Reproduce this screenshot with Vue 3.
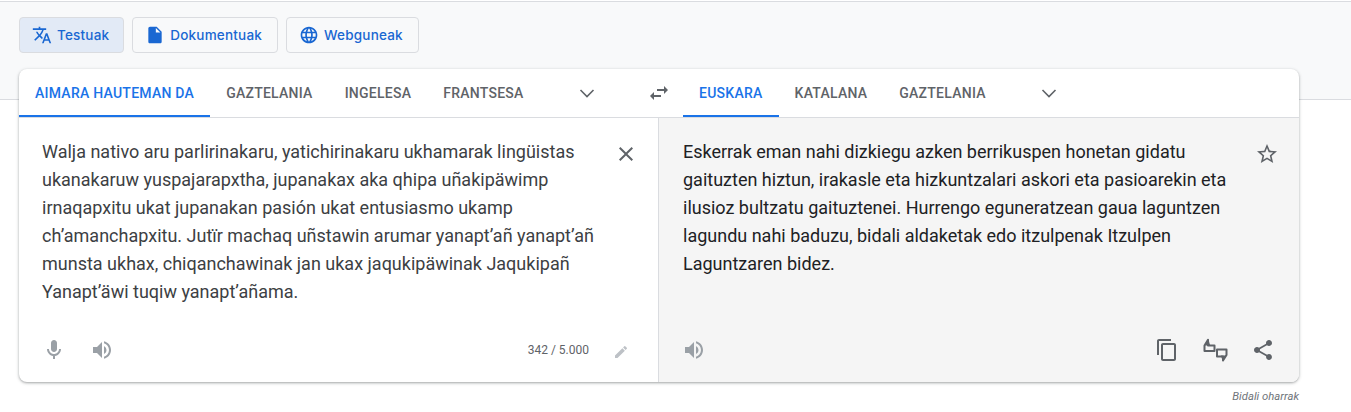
<script setup>
const modes = [
  { label: 'Testuak', icon: 'translate', active: true },
  { label: 'Dokumentuak', icon: 'doc' },
  { label: 'Webguneak', icon: 'globe' },
]
const sourceTabs = ['AIMARA HAUTEMAN DA', 'GAZTELANIA', 'INGELESA', 'FRANTSESA']
const targetTabs = ['EUSKARA', 'KATALANA', 'GAZTELANIA']
const sourceText = ['Walja nativo aru parlirinakaru, yatichirinakaru ukhamarak lingüistas', 'ukanakaruw yuspajarapxtha, jupanakax aka qhipa uñakipäwimp', 'irnaqapxitu ukat jupanakan pasión ukat entusiasmo ukamp', 'ch’amanchapxitu. Jutïr machaq uñstawin arumar yanapt’añ yanapt’añ', 'munsta ukhax, chiqanchawinak jan ukax jaqukipäwinak Jaqukipañ', 'Yanapt’äwi tuqiw yanapt’añama.']
const targetText = ['Eskerrak eman nahi dizkiegu azken berrikuspen honetan gidatu', 'gaituzten hiztun, irakasle eta hizkuntzalari askori eta pasioarekin eta', 'ilusioz bultzatu gaituztenei. Hurrengo eguneratzean gaua laguntzen', 'lagundu nahi baduzu, bidali aldaketak edo itzulpenak Itzulpen', 'Laguntzaren bidez.']
</script>

<template>
  <div class="page">
    <nav class="modes">
      <button v-for="m in modes" :key="m.label" class="mode" :class="{ active: m.active }">
        <svg v-if="m.icon === 'translate'" width="20" height="20" viewBox="0 0 24 24" fill="#1967d2"><path d="M12.87 15.07l-2.54-2.51.03-.03A17.52 17.52 0 0 0 14.07 6H17V4h-7V2H8v2H1v1.99h11.17C11.5 7.92 10.44 9.75 9 11.35 8.07 10.32 7.3 9.19 6.69 8h-2c.73 1.63 1.73 3.17 2.98 4.56l-5.09 5.02L4 19l5-5 3.11 3.11.76-2.04zM18.5 10h-2L12 22h2l1.12-3h4.75L21 22h2l-4.5-12zm-2.62 7l1.62-4.33L19.12 17h-3.24z"/></svg>
        <svg v-else-if="m.icon === 'doc'" width="20" height="20" viewBox="0 0 24 24" fill="#1967d2"><path d="M14 2H6c-1.1 0-2 .9-2 2v16c0 1.1.9 2 2 2h12c1.1 0 2-.9 2-2V8l-6-6zm-1 7V3.5L18.5 9H13z"/></svg>
        <svg v-else width="20" height="20" viewBox="0 0 24 24" fill="#1967d2"><path d="M11.99 2C6.47 2 2 6.48 2 12s4.47 10 9.99 10C17.52 22 22 17.52 22 12S17.52 2 11.99 2zm6.93 6h-2.95a15.65 15.65 0 0 0-1.38-3.56A8.03 8.03 0 0 1 18.92 8zM12 4.04c.83 1.2 1.48 2.53 1.91 3.96h-3.82c.43-1.43 1.08-2.76 1.91-3.96zM4.26 14C4.1 13.36 4 12.69 4 12s.1-1.36.26-2h3.38c-.08.66-.14 1.32-.14 2s.06 1.34.14 2H4.26zm.82 2h2.95c.32 1.25.78 2.45 1.38 3.56A7.987 7.987 0 0 1 5.08 16zm2.95-8H5.08a7.987 7.987 0 0 1 4.33-3.56A15.65 15.65 0 0 0 8.03 8zM12 19.96c-.83-1.2-1.48-2.53-1.91-3.96h3.82c-.43 1.43-1.08 2.76-1.91 3.96zM14.34 14H9.66c-.09-.66-.16-1.32-.16-2s.07-1.35.16-2h4.68c.09.65.16 1.32.16 2s-.07 1.34-.16 2zm.25 5.56c.6-1.11 1.06-2.31 1.38-3.56h2.95a8.03 8.03 0 0 1-4.33 3.56zM16.36 14c.08-.66.14-1.32.14-2s-.06-1.34-.14-2h3.38c.16.64.26 1.31.26 2s-.1 1.36-.26 2h-3.38z"/></svg>
        <span>{{ m.label }}</span>
      </button>
    </nav>

    <section class="card">
      <header class="tabsbar">
        <div class="side source-side">
          <span v-for="(t, i) in sourceTabs" :key="t" class="tab" :class="{ on: i === 0 }">{{ t }}</span>
          <svg class="chev" width="24" height="24" viewBox="0 0 24 24"><path d="M5.500 9l6.500 6.500L18.500 9" fill="none" stroke="#5f6368" stroke-width="1.600"/></svg>
        </div>
        <div class="swap">
          <svg width="24" height="24" viewBox="0 0 24 24" fill="#5f6368"><path d="M6.990 11L3 15l3.990 4v-3H14v-2H6.990v-3zM21 9l-3.990-4v3H10v2h7.010v3L21 9z"/></svg>
        </div>
        <div class="side target-side">
          <span v-for="(t, i) in targetTabs" :key="t" class="tab" :class="{ on: i === 0 }">{{ t }}</span>
          <svg class="chev chev2" width="24" height="24" viewBox="0 0 24 24"><path d="M5.500 9l6.500 6.500L18.500 9" fill="none" stroke="#5f6368" stroke-width="1.600"/></svg>
        </div>
      </header>

      <div class="panes">
        <div class="pane left">
          <div class="body">
            <p class="text dim"><span v-for="l in sourceText" :key="l" class="line">{{ l }}</span></p>
            <svg class="close" width="24" height="24" viewBox="0 0 24 24" fill="#5f6368"><path d="M19 6.410L17.590 5 12 10.590 6.410 5 5 6.410 10.590 12 5 17.590 6.410 19 12 13.410 17.590 19 19 17.590 13.410 12z"/></svg>
          </div>
          <footer class="foot">
            <div class="icons">
              <svg width="24" height="24" viewBox="0 0 24 24" fill="#9aa0a6" class="i-mic"><path d="M12 14c1.660 0 3-1.340 3-3V5c0-1.660-1.340-3-3-3S9 3.340 9 5v6c0 1.660 1.340 3 3 3z"/><path d="M17 11c0 2.760-2.240 5-5 5s-5-2.240-5-5H5c0 3.530 2.610 6.430 6 6.920V21h2v-3.080c3.390-.49 6-3.390 6-6.920h-2z"/></svg>
              <svg width="24" height="24" viewBox="0 0 24 24" fill="#9aa0a6"><path d="M3 9v6h4l5 5V4L7 9H3zm13.500 3A4.500 4.500 0 0 0 14 7.970v8.050c1.480-.73 2.500-2.250 2.500-4.020zM14 3.230v2.060c2.890.86 5 3.540 5 6.710s-2.110 5.850-5 6.710v2.060c4.010-.91 7-4.490 7-8.770s-2.990-7.860-7-8.770z"/></svg>
            </div>
            <div class="count">
              <span>342 / 5.000</span>
              <svg class="pencil" width="16" height="16" viewBox="0 0 24 24" fill="#bdc1c6"><path d="M3 17.250V21h3.750L17.810 9.940l-3.750-3.750L3 17.250zM20.710 7.040a1 1 0 0 0 0-1.410l-2.340-2.340a1 1 0 0 0-1.410 0l-1.830 1.830 3.750 3.750 1.830-1.830z"/></svg>
            </div>
          </footer>
        </div>
        <div class="pane right">
          <div class="body">
            <p class="text"><span v-for="l in targetText" :key="l" class="line">{{ l }}</span></p>
            <svg class="star" width="24" height="24" viewBox="0 0 24 24" fill="#5f6368"><path d="M22 9.240l-7.190-.62L12 2 9.190 8.630 2 9.240l5.460 4.730L5.820 21 12 17.270 18.180 21l-1.630-7.030L22 9.240zM12 15.400l-3.760 2.270 1-4.280-3.320-2.880 4.380-.38L12 6.100l1.710 4.040 4.380.38-3.320 2.880 1 4.280L12 15.400z"/></svg>
          </div>
          <footer class="foot">
            <div class="icons">
              <svg width="24" height="24" viewBox="0 0 24 24" fill="#9aa0a6"><path d="M3 9v6h4l5 5V4L7 9H3zm13.500 3A4.500 4.500 0 0 0 14 7.970v8.050c1.480-.73 2.500-2.250 2.500-4.020zM14 3.230v2.060c2.890.86 5 3.540 5 6.710s-2.110 5.850-5 6.710v2.060c4.010-.91 7-4.490 7-8.770s-2.990-7.860-7-8.770z"/></svg>
            </div>
            <div class="actions">
              <svg width="24" height="24" viewBox="0 0 24 24" fill="#5f6368"><path d="M16 1H4c-1.100 0-2 .9-2 2v14h2V3h12V1zm3 4H8c-1.100 0-2 .9-2 2v14c0 1.100.9 2 2 2h11c1.100 0 2-.9 2-2V7c0-1.100-.9-2-2-2zm0 16H8V7h11v14z"/></svg>
              <svg class="rate" width="26" height="24" viewBox="0 0 26 24" fill="none" stroke="#5f6368" stroke-width="2" stroke-linejoin="round"><path d="M1.500 7.500L5 1.800V7.500h6.500v5.500H1.500z"/><path d="M14 11.500h9.500V17L20 22.500V18.500h-6z"/><path d="M2 7.500L5.200 .8 7.200 7.500z" fill="#5f6368" stroke="none"/><path d="M23 17.500L19.800 23.200 17.800 17.500z" fill="#5f6368" stroke="none"/></svg>
              <svg width="24" height="24" viewBox="0 0 24 24" fill="#5f6368"><path d="M18 16.080c-.76 0-1.440.3-1.960.77L8.910 12.700c.05-.23.090-.46.090-.7s-.04-.47-.09-.7l7.050-4.110c.54.500 1.250.81 2.040.81 1.660 0 3-1.340 3-3s-1.340-3-3-3-3 1.340-3 3c0 .24.040.47.090.7L8.040 9.810C7.500 9.310 6.790 9 6 9c-1.660 0-3 1.340-3 3s1.340 3 3 3c.79 0 1.500-.31 2.040-.81l7.120 4.160c-.05.210-.08.430-.08.650 0 1.610 1.310 2.920 2.920 2.920s2.920-1.310 2.920-2.920-1.310-2.920-2.920-2.920z"/></svg>
            </div>
          </footer>
        </div>
      </div>
    </section>
    <p class="feedback">Bidali oharrak</p>
  </div>
</template>

<style>
html, body { margin: 0; background: #fff; }
</style>

<style scoped>
.page {
  width: 1351px;
  height: 412px;
  box-sizing: border-box;
  padding: 17px 52px 0 19px;
  overflow: hidden;
  font-family: Roboto, sans-serif;
  background: linear-gradient(to bottom, #fff 0, #fff 1px, #dadce0 1px, #dadce0 2px, #f8f9fa 2px, #f8f9fa 99px, #dadce0 99px, #dadce0 100px, #fff 100px);
}
.modes { display: flex; gap: 8px; height: 36px; }
.mode {
  display: flex;
  align-items: center;
  gap: 5px;
  height: 36px;
  padding: 0 15px 0 12px;
  box-sizing: border-box;
  border: 1px solid #dadce0;
  border-radius: 4px;
  background: transparent;
  color: #1967d2;
  font: 500 13.5px Inter, sans-serif;
  letter-spacing: .2px;
}
.mode.active { background: #e2eaf6; padding-right: 14px; }
.card {
  margin-top: 16px;
  height: 313px;
  display: flex;
  flex-direction: column;
  background: #fff;
  border-radius: 8px;
  box-shadow: 0 1px 2px rgba(60,64,67,.3), 0 1px 3px 1px rgba(60,64,67,.15);
  overflow: hidden;
}
.tabsbar { display: flex; height: 48px; border-bottom: 1px solid #dadce0; flex: none; }
.side { display: flex; }
.source-side { width: 616px; }
.swap { width: 48px; display: flex; align-items: center; justify-content: center; }
.tab {
  display: flex;
  align-items: center;
  height: 48px;
  box-sizing: border-box;
  padding: 0 16px;
  font-size: 14px;
  font-weight: 500;
  letter-spacing: .25px;
  color: #5f6368;
  white-space: nowrap;
}
.tab.on { color: #1a73e8; border-bottom: 2px solid #1a73e8; padding-top: 2px; }
.chev { margin: 12px 0 0 35px; }
.chev2 { margin-left: 35px; }
.panes { flex: 1; display: flex; min-height: 0; }
.pane { display: flex; flex-direction: column; justify-content: space-between; box-sizing: border-box; }
.left { width: 639px; }
.right { flex: 1; background: #f5f5f5; border-left: 1px solid #dadce0; }
.body { display: flex; justify-content: space-between; }
.text {
  margin: 0;
  font-size: 18px;
  line-height: 28px;
  color: #202124;
  padding-top: 20px;
  padding-left: 24px;
  white-space: nowrap;
}
.dim { color: #3c4043; padding-left: 23px; }
.line { display: block; }
.close { margin: 24px 20px 0 0; }
.star { margin: 24px 20px 0 0; }
.foot { display: flex; align-items: center; justify-content: space-between; height: 64px; box-sizing: border-box; }
.icons { display: flex; gap: 24px; padding-left: 23px; }
.count { display: flex; align-items: center; gap: 24px; padding-right: 29px; font-size: 12px; color: #5f6368; }
.pencil { margin-top: 3px; }
.actions { display: flex; gap: 24px; padding-right: 24px; }
.rate { margin-right: -2px; }
.feedback {
  margin: 8px 0 0;
  text-align: right;
  font-size: 11.300px;
  font-style: italic;
  color: #70757a;
}
</style>
